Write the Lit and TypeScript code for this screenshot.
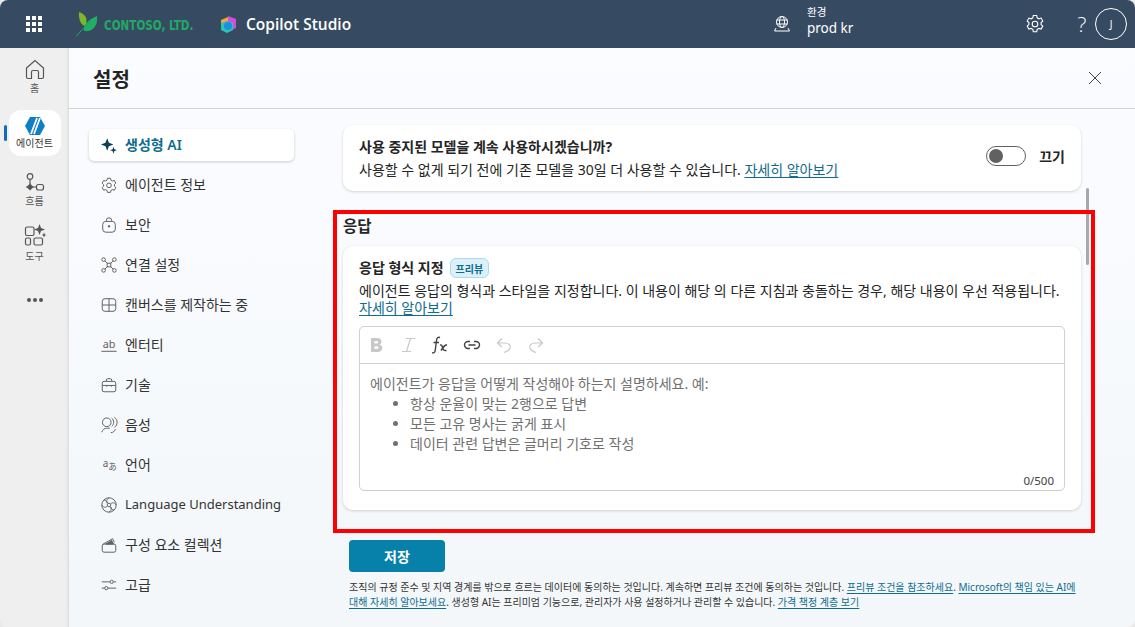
import { LitElement, html, css, svg } from "lit";
import { customElement } from "lit/decorators.js";

const ic = (body: unknown, size = 18, vb = 20) => html`<svg class="ico" width=${size} height=${size} viewBox="0 0 ${vb} ${vb}" fill="none" stroke="currentColor" stroke-width="1.1">${body}</svg>`;

const navIcons: Record<string, unknown> = {
  spark: svg`<path fill="#0e3f5c" stroke="none" d="M8 2.500l1.900 5 5 1.900-5 1.900-1.900 5-1.900-5-5-1.900 5-1.900z"/><path fill="#0e3f5c" stroke="none" d="M15 12l1 2.800 2.800 1-2.800 1-1 2.800-1-2.800-2.800-1 2.800-1z"/>`,
  gear: svg`<path d="M8.300 2.500h3.400l.5 2.200 1.600.9 2.100-.7 1.700 3-1.600 1.500v1.900l1.600 1.500-1.700 3-2.100-.7-1.600.9-.5 2.200H8.300l-.5-2.200-1.600-.9-2.100.7-1.700-3 1.600-1.500V9.400L2.400 7.900l1.700-3 2.100.7 1.600-.9z"/><circle cx="10" cy="10.400" r="2.600"/>`,
  lock: svg`<rect x="3" y="6" width="14" height="12" rx="3.500"/><path d="M7 6.500V5a3 3 0 0 1 6 0v1.500"/><circle cx="10" cy="11.500" r=".9" fill="currentColor"/>`,
  conn: svg`<circle cx="4" cy="4" r="2"/><circle cx="16" cy="4" r="2"/><circle cx="4" cy="16" r="2"/><circle cx="16" cy="16" r="2"/><rect x="8" y="8" width="4" height="4"/><path d="M5.500 5.500L8 8M14.500 5.500L12 8M5.500 14.500L8 12M14.500 14.500L12 12"/>`,
  grid: svg`<rect x="2.500" y="3" width="15" height="14" rx="3"/><path d="M2.500 10h15M10 3v14"/>`,
  ab: svg`<text x="10" y="13" text-anchor="middle" font-size="12" font-family="Noto Sans" fill="currentColor" stroke="none">ab</text><path d="M1.500 17h17"/>`,
  case: svg`<rect x="2.500" y="6" width="15" height="11.500" rx="2"/><path d="M7 6V4.500A1.500 1.500 0 0 1 8.500 3h3A1.500 1.500 0 0 1 13 4.500V6M2.500 10.500h15M7.500 10.500v1.500M12.500 10.500v1.500"/>`,
  voice: svg`<circle cx="7.500" cy="7" r="4.800"/><path d="M2 18c.5-3 3.500-4.500 6-4.500h3M13 2.500c1.500 1 2.200 2.500 2.200 4.500s-.7 3.500-2.200 4.500M16 1.500c2 1.300 3 3 3 5.500s-1 4.200-3 5.500M12 18.500c2.500 0 4.500-1.500 5-4"/>`,
  lang: svg`<text x="6" y="12" text-anchor="middle" font-size="11" font-family="Noto Sans" fill="currentColor" stroke="none">a</text><text x="14" y="16" text-anchor="middle" font-size="9.500" font-family="Noto Sans CJK JP" fill="currentColor" stroke="none">あ</text>`,
  lu: svg`<circle cx="10" cy="10" r="8"/><circle cx="10" cy="10" r="2"/><path d="M10 2c-3 2-3 4-1.500 6M18 10c-2-3-4-3-6-1.500M10 18c3-2 3-4 1.500-6M2 10c2 3 4 3 6 1.500M4.500 4.500c2 0 3 1 3.500 3.500M15.500 15.500c-2 0-3-1-3.500-3.500"/>`,
  box: svg`<rect x="2.500" y="9" width="15" height="9" rx="2"/><path d="M3.500 9l10.500-6 2 4"/><path fill="currentColor" d="M6.500 9l6.500-4 2 4z"/>`,
  sliders: svg`<path d="M2 6.500h9M15 6.500h3M2 13.500h3M9 13.500h9"/><circle cx="13" cy="6.500" r="1.800"/><circle cx="7" cy="13.500" r="1.800"/>`,
};

const nav: [string, string][] = [
  ["spark", "생성형 AI"], ["gear", "에이전트 정보"], ["lock", "보안"], ["conn", "연결 설정"],
  ["grid", "캔버스를 제작하는 중"], ["ab", "엔터티"], ["case", "기술"], ["voice", "음성"],
  ["lang", "언어"], ["lu", "Language Understanding"], ["box", "구성 요소 컬렉션"], ["sliders", "고급"],
];

@customElement("app-root")
export class AppRoot extends LitElement {
  static styles = css`
    :host { display: block; width: 1135px; height: 627px; overflow: hidden; background: #e9e9e9;
      font-family: "Noto Sans", "Noto Sans CJK KR", sans-serif; color: #242424; font-size: 14px; }
    * { box-sizing: border-box; }
    a { color: #0f6c8e; text-decoration: underline; text-underline-offset: 2px; }
    .app { width: 1135px; height: 627px; display: flex; flex-direction: column; border-radius: 8px; overflow: hidden; }
    header { height: 48px; flex: none; background: #364b61; color: #fff; display: flex; align-items: center; }
    .waffle { width: 16px; height: 16px; margin-left: 26px; display: grid; grid-template-columns: repeat(3, 3.5px); gap: 2.5px; }
    .waffle i { width: 3.500px; height: 3.500px; background: #fff; display: block; }
    .leaf { margin-left: 34px; flex: none; }
    .cbox { width: 116px; flex: none; margin-left: 6px; }
    .contoso { display: inline-block; font-family: "DejaVu Sans Condensed", "DejaVu Sans", sans-serif; font-weight: 700; font-size: 14.500px; color: #22a866; white-space: nowrap; transform: scaleX(.8); transform-origin: left center; }
    .cube { flex: none; }
    .studio { font-size: 15.500px; margin-left: 9px; font-family: "Open Sans", sans-serif; font-weight: 600; }
    .spacer { flex: 1; }
    .envico { margin-right: 16px; flex: none; }
    .env { display: flex; flex-direction: column; width: 219px; line-height: 16px; margin-top: -6px; }
    .env small { font-size: 10.500px; line-height: 14px; }
    .env span { font-size: 13.500px; line-height: 18px; }
    .hgear { margin-right: 31px; flex: none; }
    .q { font-size: 21px; font-weight: 300; margin-right: 6px; font-family: "Open Sans", sans-serif; width: 14px; text-align: center; }
    .avatar { width: 32px; height: 32px; border: 1px solid #fff; border-radius: 50%; display: grid; place-items: center; font-size: 10px; margin-right: 8px; }
    .body { flex: 1; display: flex; min-height: 0; }
    .rail { width: 69px; flex: none; background: #efefef; display: flex; flex-direction: column; align-items: center; padding-top: 11px; box-shadow: inset -3px 0 3px -2px #d8d8d8; }
    .ritem { width: 52px; display: flex; flex-direction: column; align-items: center; font-size: 10px; color: #555; line-height: 13px; gap: 2px; }
    .ritem svg { color: #555; flex: none; }
    .ritem.sel { height: 46px; background: #fff; border-radius: 12px; color: #333; justify-content: center; margin: 15px 0 0; position: relative; gap: 2px; padding-top: 1px; }
    .ritem.sel::before { content: ""; position: absolute; left: -5px; top: 15px; width: 3px; height: 16px; border-radius: 2px; background: #0f6cbd; }
    .ritem.flow { margin-top: 17px; gap: 2px; }
    .ritem.tool { margin-top: 16px; gap: 4px; }
    .dots { margin-top: 35px; display: flex; gap: 2px; }
    .dots i { width: 4px; height: 4px; border-radius: 50%; background: #555; display: block; }
    main { flex: 1; min-width: 0; display: flex; flex-direction: column; position: relative; background: linear-gradient(180deg, #fbfcff, #f3f7fa); }
    .title { height: 61px; flex: none; border-bottom: 1px solid #d4d4d4; display: flex; align-items: center; justify-content: space-between; padding: 0 33px 0 24px; }
    h1 { font-size: 20px; margin: 0; font-weight: 700; color: #242424; }
    .cols { flex: 1; display: flex; min-height: 0; }
    .nav { width: 274px; flex: none; padding: 20px 0 0 20px; }
    .nitem { width: 205px; height: 32px; margin-bottom: 8px; display: flex; align-items: center; padding-left: 11px; gap: 7px; color: #333; font-size: 14px; white-space: nowrap; border-radius: 5px; }
    .nitem span { padding-bottom: 2px; }
    .nitem span.latin { font-size: 13px; }
    .nitem svg { color: #616161; flex: none; }
    .nitem.sel { background: #fff; box-shadow: 0 1px 3px rgba(0,0,0,.2); color: #0f6c8e; font-weight: 600; }
    .content { width: 738px; padding-top: 16px; }
    .card { background: #fff; border-radius: 10px; box-shadow: 0 1px 3px rgba(0,0,0,.16); }
    .top { height: 66px; padding: 12px 16px 0; display: flex; justify-content: space-between; }
    .top b, .fmt b { font-size: 14px; font-weight: 700; line-height: 20px; display: block; }
    .top p { margin: 3px 0 0; line-height: 20px; font-size: 14px; }
    .toggle { display: flex; gap: 13px; align-items: center; height: 38px; font-weight: 700; font-size: 14px; color: #242424; }
    .switch { width: 40px; height: 20px; border: 1px solid #616161; border-radius: 10px; padding: 2px; }
    .switch i { display: block; width: 14px; height: 14px; background: #616161; border-radius: 50%; }
    h2 { font-size: 15.500px; font-weight: 700; margin: 24px 0 9px; line-height: 22px; color: #242424; }
    .fmt { height: 264px; padding: 11px 16px 0; }
    .fh { display: flex; align-items: center; gap: 6px; height: 22px; }
    .badge { font-size: 10px; font-weight: 700; color: #0f6c8e; background: #ddf0fa; border: 1px solid #a9d9f0; border-radius: 6px; height: 20px; padding: 0 5px; display: flex; align-items: center; }
    .fmt p { margin: 3px 0 0; font-size: 14px; line-height: 17px; white-space: nowrap; }
    .editor { margin-top: 10px; height: 165px; border: 1px solid #d0d0d0; border-radius: 5px; display: flex; flex-direction: column; position: relative; }
    .tb { height: 37px; flex: none; border-bottom: 1px solid #d0d0d0; display: flex; align-items: center; padding-left: 6px; gap: 12px; }
    .tb span { width: 20px; height: 20px; display: grid; place-items: center; color: #c8c8c8; }
    .tb span.on { color: #424242; }
    .ph { padding: 10px 10px; color: #707070; font-size: 14px; line-height: 20px; }
    .ph ul { margin: 0; padding-left: 40px; }
    .count { position: absolute; right: 10px; bottom: 1px; font-size: 11.500px; color: #424242; line-height: 16px; }
    .save { display: block; margin: 30px 0 0 6px; width: 96px; height: 32px; border: 0; border-radius: 4px; background: #0780aa; color: #fff; font: 700 14px "Noto Sans", "Noto Sans CJK KR", sans-serif; }
    .legal { margin: 8px 0 0 6px; width: 740px; font-size: 10px; line-height: 15px; color: #333; white-space: nowrap; }
    .thumb { position: absolute; left: 1017px; top: 140px; width: 3px; height: 77px; border-radius: 2px; background: #a8a8a8; }
    .mark { position: absolute; left: 264px; top: 162px; width: 762px; height: 323px; border: 4px solid #ff0000; pointer-events: none; }
  `;

  render() {
    return html`<div class="app">
      <header>
        <div class="waffle">${Array.from({ length: 9 }, () => html`<i></i>`)}</div>
        <svg class="leaf" width="22" height="25" viewBox="0 0 22 25"><path fill="#7ab929" d="M3 0c5 1.500 8 5 7.500 9.500-.2 2-1 3.500-2 4.500C4 12 2.500 5.500 3 0z"/><path fill="#1fae63" d="M21 4c1 7-2 13.500-8.500 15-1.700.3-3.500.2-4.700-.5C7.500 12.500 12 8 21 4z"/><path stroke="#1fae63" stroke-width="1" fill="none" d="M0 24.500c4-5 8-9 14-13.500"/></svg>
        <div class="cbox"><span class="contoso">CONTOSO, LTD.</span></div>
        <svg class="cube" width="17" height="18" viewBox="0 0 17 18"><path fill="#d04fd8" d="M8 1l8 3v9l-8 4z"/><path fill="#f7a53b" d="M1 5l7-3v8l-7 4z"/><path fill="#2ec4b6" d="M1 8l6-2 6 2v7l-6 3-6-3z"/><circle cx="8" cy="11" r="4" fill="#1a8fe3"/></svg>
        <span class="studio">Copilot Studio</span>
        <span class="spacer"></span>
        <svg class="envico" width="18" height="18" viewBox="0 0 18 18" fill="none" stroke="#fff"><circle cx="9" cy="7" r="5.500"/><ellipse cx="9" cy="7" rx="2.500" ry="5.500"/><path d="M3.500 5h11M3.500 9h11M3 13l-1.500 3h15L15 13"/></svg>
        <div class="env"><small>환경</small><span>prod kr</span></div>
        <svg class="hgear" width="18" height="18" viewBox="1 1 18 18" fill="none" stroke="#fff" stroke-width="1.100"><path d="M8.300 1.500h3.400l.5 2.300 1.700 1 2.200-.7 1.700 3-1.700 1.500v2l1.700 1.500-1.700 3-2.200-.7-1.700 1-.5 2.300H8.300l-.5-2.300-1.700-1-2.200.7-1.700-3 1.700-1.500v-2L2.200 7.100l1.700-3 2.200.7 1.700-1z"/><circle cx="10" cy="10" r="2.800"/></svg>
        <span class="q">?</span>
        <div class="avatar">J</div>
      </header>
      <div class="body">
        <aside class="rail">
          <div class="ritem"><svg width="20" height="21" viewBox="0 0 20 21" fill="none" stroke="currentColor" stroke-width="1.200"><path d="M1.500 9L10 1.500 18.500 9v9a1.500 1.500 0 0 1-1.500 1.500h-3.500V13a1.500 1.500 0 0 0-1.500-1.500H8A1.500 1.500 0 0 0 6.500 13v6.500H3A1.500 1.500 0 0 1 1.500 18z"/></svg><span>홈</span></div>
          <div class="ritem sel"><svg width="20" height="18" viewBox="0 0 20 18"><path fill="#0f7fc4" d="M5 0h10l5 9-5 9H5L0 9z"/><path stroke="#fff" stroke-width="1.800" d="M12 1L6 17M15 1L9 17"/></svg><span>에이전트</span></div>
          <div class="ritem flow"><svg width="20" height="20" viewBox="0 0 20 20" fill="none" stroke="currentColor" stroke-width="1.200"><circle cx="5" cy="3.500" r="2.800"/><path d="M5 6.500v5M1 14h2M7 14h4"/><path fill="currentColor" stroke="none" d="M5 10.500L8.500 14 5 17.500 1.500 14z"/><rect x="11.500" y="11.500" width="7" height="5.500" rx="2"/></svg><span>흐름</span></div>
          <div class="ritem tool"><svg width="22" height="22" viewBox="0 0 22 22" fill="none" stroke="currentColor" stroke-width="1.200"><rect x="1.500" y="3" width="8.500" height="8.500" rx="1.500"/><rect x="1.500" y="14" width="5" height="7" rx="1.500"/><rect x="10" y="14" width="8.500" height="7" rx="1.500"/><path fill="currentColor" stroke="none" d="M15.500 0l1.500 4 4 1.500-4 1.500-1.500 4-1.500-4-4-1.500 4-1.500z"/><path fill="currentColor" stroke="none" d="M20 8.500l.7 1.800 1.300.7-1.300.7-.7 1.800-.7-1.800-1.300-.7 1.300-.7z"/></svg><span>도구</span></div>
          <div class="dots"><i></i><i></i><i></i></div>
        </aside>
        <main>
          <div class="title"><h1>설정</h1><svg width="14" height="14" viewBox="0 0 14 14" stroke="#424242" stroke-width="1"><path d="M1 1l12 12M13 1L1 13"/></svg></div>
          <div class="cols">
            <nav class="nav">${nav.map(([k, t], i) => html`<div class="nitem ${i === 0 ? "sel" : ""}">${ic(navIcons[k], 18)}<span class=${k === "lu" ? "latin" : ""}>${t}</span></div>`)}</nav>
            <section class="content">
              <div class="card top">
                <div><b>사용 중지된 모델을 계속 사용하시겠습니까?</b><p>사용할 수 없게 되기 전에 기존 모델을 30일 더 사용할 수 있습니다. <a href="#">자세히 알아보기</a></p></div>
                <div class="toggle"><div class="switch"><i></i></div><span>끄기</span></div>
              </div>
              <h2>응답</h2>
              <div class="card fmt">
                <div class="fh"><b>응답 형식 지정</b><span class="badge">프리뷰</span></div>
                <p>에이전트 응답의 형식과 스타일을 지정합니다. 이 내용이 해당 의 다른 지침과 충돌하는 경우, 해당 내용이 우선 적용됩니다.<br><a href="#">자세히 알아보기</a></p>
                <div class="editor">
                  <div class="tb">
                    <span><svg width="14" height="16" viewBox="0 0 14 16"><path fill="currentColor" fill-rule="evenodd" d="M2 1h6c3 0 4.500 1.500 4.500 3.500 0 1.500-.8 2.500-2 3 1.600.4 2.800 1.700 2.800 3.500 0 2.500-2 4-5 4H2zm3.500 3v2.500h2c1 0 1.500-.5 1.500-1.300S8.500 4 7.500 4zm0 5.200V12h2.300c1.100 0 1.700-.5 1.700-1.400s-.6-1.400-1.700-1.400z"/></svg></span>
                    <span><svg width="15" height="16" viewBox="0 0 15 16" stroke="currentColor" fill="none" stroke-width="1.200"><path d="M5 1.500h9M1 14.500h9M9.500 1.500l-4 13"/></svg></span>
                    <span class="on"><svg width="18" height="18" viewBox="0 0 18 18" fill="none" stroke="currentColor" stroke-width="1.400"><path d="M9 1.500C7 .8 5.800 2 5.500 4.500L4.200 14.500C4 16.300 3 17.200 1 16.800M2.500 6.500h5.500M9 9c1.500-.5 2 .5 2.500 2.500S13 15 15.500 14.300M16 9c-1.800-.5-3 1-6 5.500"/></svg></span>
                    <span class="on"><svg width="18" height="18" viewBox="0 0 18 18" fill="none" stroke="currentColor" stroke-width="1.400"><path d="M7 5.500H5a3.500 3.500 0 0 0 0 7h2M11 5.500h2a3.500 3.500 0 0 1 0 7h-2M5.500 9h7"/></svg></span>
                    <span><svg width="16" height="17" viewBox="0 0 16 17" fill="none" stroke="currentColor" stroke-width="1.200"><path d="M6 1.500L1.500 6 6 10M1.500 6H9c4 0 6 2.500 5 5-.5 2-3 3.500-6 4.500"/></svg></span>
                    <span><svg width="16" height="17" viewBox="0 0 16 17" fill="none" stroke="currentColor" stroke-width="1.200"><path d="M10 1.500L14.500 6 10 10M14.500 6H7c-4 0-6 2.500-5 5 .5 2 3 3.500 6 4.500"/></svg></span>
                  </div>
                  <div class="ph">에이전트가 응답을 어떻게 작성해야 하는지 설명하세요. 예:
                    <ul><li>항상 운율이 맞는 2행으로 답변</li><li>모든 고유 명사는 굵게 표시</li><li>데이터 관련 답변은 글머리 기호로 작성</li></ul>
                  </div>
                  <span class="count">0/500</span>
                </div>
              </div>
              <button class="save">저장</button>
              <p class="legal">조직의 규정 준수 및 지역 경계를 밖으로 흐르는 데이터에 동의하는 것입니다. 계속하면 프리뷰 조건에 동의하는 것입니다. <a href="#">프리뷰 조건을 참조하세요</a>. <a href="#">Microsoft의 책임 있는 AI에</a><br><a href="#">대해 자세히 알아보세요</a>. 생성형 AI는 프리미엄 기능으로, 관리자가 사용 설정하거나 관리할 수 있습니다. <a href="#">가격 책정 계층 보기</a></p>
            </section>
          </div>
          <div class="thumb"></div>
          <div class="mark"></div>
        </main>
      </div>
    </div>`;
  }
}
